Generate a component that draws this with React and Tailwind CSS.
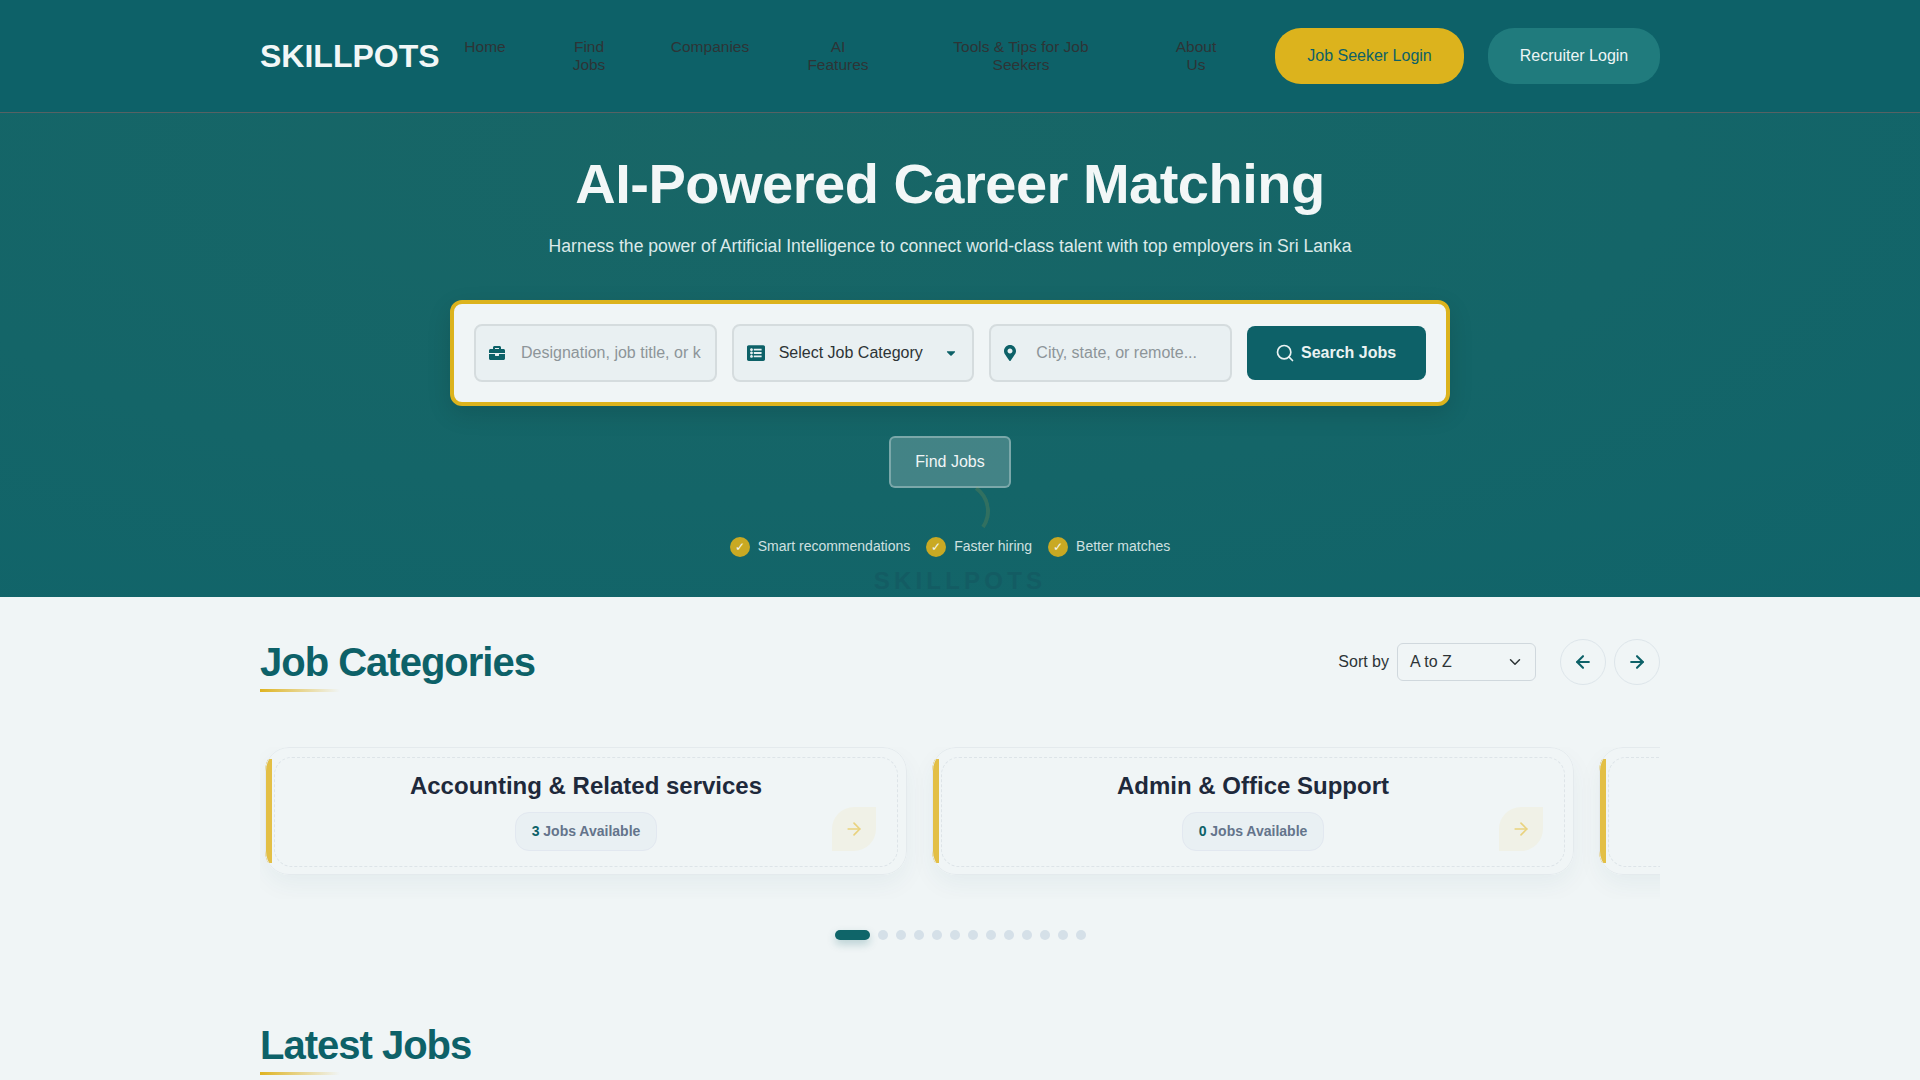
import { ArrowLeft, ArrowRight, ChevronDown, Search } from 'lucide-react'
import { FaBriefcase, FaCaretDown, FaListAlt, FaMapMarkerAlt } from 'react-icons/fa'

const navLinks = [
  { label: 'Home', className: 'w-[92px] px-[20px]' },
  { label: 'Find Jobs', className: 'w-[116px] px-[34px]' },
  { label: 'Companies', className: 'w-[126px] px-[20px]' },
  { label: 'AI Features', className: 'w-[130px] px-[32px]' },
  { label: 'Tools & Tips for Job Seekers', className: 'w-[236px] px-[48px]' },
  { label: 'About Us', className: 'w-[114px] px-[33px]' },
]

const perks = ['Smart recommendations', 'Faster hiring', 'Better matches']

const categories = [
  { name: 'Accounting & Related services', count: 3 },
  { name: 'Admin & Office Support', count: 0 },
  { name: '', count: null },
]

const dots = Array.from({ length: 12 }, (_, i) => i)

function SectionTitle({ children }) {
  return (
    <div className="pb-[13px]">
      <h2 className="text-[40px] leading-[48px] font-bold tracking-[-1px] text-[#0d6168]">{children}</h2>
      <div className="mt-[3px] h-[3px] w-[80px] bg-gradient-to-r from-[#dfb320] to-transparent" />
    </div>
  )
}

function CategoryCard({ name, count }) {
  return (
    <div className="relative h-[128px] w-[642px] shrink-0 overflow-hidden rounded-[24px] bg-[#f0f5f6]">
      <div className="absolute left-0 top-[12px] h-[104px] w-[7px] bg-[#e3bf45]" />
      <div className="absolute inset-0 rounded-[24px] border border-[#e4eaed]" />
      <div className="absolute bottom-[8px] left-[9px] right-[9px] top-[10px] rounded-[18px] border border-dashed border-[#dde4e8]" />
      {count !== null && (
        <div className="relative flex flex-col items-center pt-[21px]">
          <h3 className="text-[24px] leading-[36px] font-bold text-[#1e293b]">{name}</h3>
          <div className="mt-[8px] flex h-[39px] items-center rounded-[14px] border border-[#e2e8f0] bg-[#e9f0f3] px-[16px] text-[14px] font-bold text-[#64748b]">
            <span className="text-[#0d6168]">{count}</span>
            <span>&nbsp;Jobs Available</span>
          </div>
          <div className="absolute right-[31px] top-[60px] flex h-[44px] w-[44px] items-center justify-center rounded-tl-[22px] rounded-br-[22px] bg-[#f0f1e7]">
            <ArrowRight className="h-[20px] w-[20px] text-[#e9d27e]" />
          </div>
        </div>
      )}
    </div>
  )
}

export default function App() {
  return (
    <div className="h-[1080px] overflow-hidden bg-[#f0f5f6] font-['Liberation_Sans',Arial,sans-serif] text-[#2d3436]">
      <header className="h-[113px] border-b border-[#566264] bg-[#0d6168]">
        <div className="mx-auto flex h-full w-[1400px] items-center">
          <a className="w-[179px] text-[32px] font-bold text-[#f2f7f7]">SKILLPOTS</a>
          <nav className="flex w-[836px] text-center text-[15.5px] leading-[18px] text-[#2d3436]">
            {navLinks.map((link) => (
              <a key={link.label} className={link.className}>
                {link.label}
              </a>
            ))}
          </nav>
          <div className="flex gap-[24px]">
            <button className="h-[56px] w-[189px] rounded-[26px] bg-[#dcb31d] text-[16px] text-[#0d6168]">
              Job Seeker Login
            </button>
            <button className="h-[56px] w-[172px] rounded-[26px] bg-[#207b7d] text-[16px] text-[#eef5f5]">
              Recruiter Login
            </button>
          </div>
        </div>
      </header>

      <section className="relative h-[484px] bg-[radial-gradient(ellipse_at_40%_10%,#186666_0%,#146568_55%,#10646a_100%)]">
        <div className="flex flex-col items-center pr-[20px] pt-[37px]">
          <h1 className="text-[56px] leading-[68px] font-bold tracking-[-0.5px] text-[#f2f7f7]">
            AI-Powered Career Matching
          </h1>
          <p className="mt-[15px] text-[17.6px] leading-[27px] text-[#dceaea]">
            Harness the power of Artificial Intelligence to connect world-class talent with top employers in Sri Lanka
          </p>

          <div className="mt-[40px] flex h-[106px] w-[1000px] items-center gap-[15px] rounded-[12px] border-4 border-[#dcb31d] bg-[#f0f5f6] px-[20px] shadow-[0_8px_24px_rgba(0,0,0,0.12)]">
            <div className="flex h-[58px] min-w-0 flex-1 basis-0 items-center rounded-[8px] border-2 border-[#d5dcde] bg-[#e9f0f2] pl-[13px] pr-[14px]">
              <FaBriefcase className="h-[16px] w-[16px] shrink-0 text-[#0d6168]" />
              <input
                placeholder="Designation, job title, or keyword"
                className="ml-[16px] w-full min-w-0 bg-transparent text-[16px] outline-none placeholder:text-[#8d9599]"
              />
            </div>
            <div className="flex h-[58px] min-w-0 flex-1 basis-0 items-center rounded-[8px] border-2 border-[#d5dcde] bg-[#e9f0f2] pl-[13px] pr-[14px]">
              <FaListAlt className="h-[18px] w-[18px] shrink-0 text-[#0d6168]" />
              <span className="ml-[14px] flex-1 whitespace-nowrap text-[16px]">Select Job Category</span>
              <FaCaretDown className="h-[14px] w-[14px] text-[#0d6168]" />
            </div>
            <div className="flex h-[58px] min-w-0 flex-1 basis-0 items-center rounded-[8px] border-2 border-[#d5dcde] bg-[#e9f0f2] pl-[13px] pr-[14px]">
              <FaMapMarkerAlt className="h-[16px] w-[12px] shrink-0 text-[#0d6168]" />
              <input
                placeholder="City, state, or remote..."
                className="ml-[20px] w-full min-w-0 bg-transparent text-[16px] outline-none placeholder:text-[#8d9599]"
              />
            </div>
            <button className="flex h-[54px] w-[179px] shrink-0 items-center gap-[6px] rounded-[8px] bg-[#0d6168] pl-[28px] text-[16px] font-bold text-[#eaf2f2]">
              <Search className="h-[20px] w-[20px]" />
              Search Jobs
            </button>
          </div>

          <button className="mt-[30px] h-[52px] w-[122px] rounded-[6px] border-2 border-white/30 bg-white/20 text-[16px] text-[#f0f5f6]">
            Find Jobs
          </button>

          <ul className="mt-[48px] flex gap-[16px] text-[14px] text-[#cfe0e0]">
            {perks.map((perk) => (
              <li key={perk} className="flex items-center gap-[8px]">
                <span className="flex h-[20px] w-[20px] items-center justify-center rounded-full bg-[#c9a923] text-[12px] text-[#f4f4ea]">
                  ✓
                </span>
                {perk}
              </li>
            ))}
          </ul>
        </div>

        {/* loader sitting on top of the hero */}
        <div className="absolute left-1/2 top-[368px] h-[60px] w-[60px] -translate-x-1/2 -rotate-[10deg] rounded-full border-4 border-transparent border-r-[#d4af37]/15" />
        <div className="absolute left-1/2 top-[454px] -translate-x-1/2 text-[24px] leading-[28px] font-bold tracking-[4.2px] text-[#135c63]">
          SKILLPOTS
        </div>
      </section>

      <main className="mx-auto w-[1400px]">
        <div className="flex items-start justify-between pt-[41px]">
          <SectionTitle>Job Categories</SectionTitle>
          <div className="mt-[1px] flex items-center">
            <span className="text-[16px]">Sort by</span>
            <div className="ml-[8px] flex h-[38px] w-[139px] items-center justify-between rounded-[6px] border border-[#d0d8dd] pl-[12px] pr-[11px] text-[16px]">
              A to Z
              <ChevronDown className="h-[18px] w-[18px]" />
            </div>
            <div className="ml-[24px] flex gap-[8px]">
              <button className="flex h-[46px] w-[46px] items-center justify-center rounded-full border border-[#dde5ea] text-[#0d6168]">
                <ArrowLeft className="h-[20px] w-[20px]" strokeWidth={2.5} />
              </button>
              <button className="flex h-[46px] w-[46px] items-center justify-center rounded-full border border-[#dde5ea] text-[#0d6168]">
                <ArrowRight className="h-[20px] w-[20px]" strokeWidth={2.5} />
              </button>
            </div>
          </div>
        </div>

        <div className="mt-[42px] flex gap-[25px] overflow-hidden pb-[24px] pl-[5px]">
          {categories.map((cat) => (
            <div key={cat.name} className="rounded-[24px] shadow-[0_10px_24px_rgba(15,80,90,0.05)]">
              <CategoryCard name={cat.name} count={cat.count} />
            </div>
          ))}
        </div>

        <div className="mt-[31px] flex items-center justify-center gap-[8px]">
          <span className="h-[10px] w-[35px] rounded-[5px] bg-[#0f6569] shadow-[0_4px_8px_rgba(13,97,104,0.25)]" />
          {dots.map((d) => (
            <span key={d} className="h-[10px] w-[10px] rounded-full bg-[#d5e0e8]" />
          ))}
        </div>

        <div className="mt-[81px]">
          <SectionTitle>Latest Jobs</SectionTitle>
        </div>
      </main>
    </div>
  )
}
